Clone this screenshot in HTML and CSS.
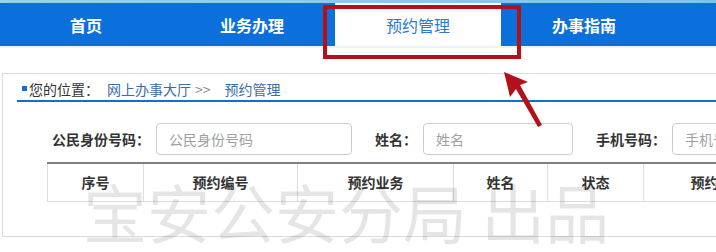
FILE: index.html
```html
<!DOCTYPE html>
<html lang="zh-CN">
<head>
<meta charset="utf-8">
<title>预约管理</title>
<link rel="stylesheet" href="styles.css">
</head>
<body>
<div class="topline"></div>
<nav class="nav">
  <a class="nav-item">首页</a>
  <a class="nav-item">业务办理</a>
  <a class="nav-item active">预约管理</a>
  <a class="nav-item">办事指南</a>
</nav>
<div class="nav-shadow"></div>

<div class="panel">
  <div class="crumb">
    <span class="crumb-dot"></span>
    <span class="crumb-label">您的位置：</span>
    <a class="crumb-link">网上办事大厅</a>
    <span class="crumb-sep">&gt;&gt;</span>
    <a class="crumb-link">预约管理</a>
  </div>

  <div class="search">
    <label class="field-label">公民身份号码：</label>
    <input class="field-input w-id" placeholder="公民身份号码">
    <label class="field-label">姓名：</label>
    <input class="field-input w-name" placeholder="姓名">
    <label class="field-label">手机号码：</label>
    <input class="field-input w-phone" placeholder="手机号码">
  </div>

  <table class="grid">
    <thead>
      <tr>
        <th class="c1">序号</th>
        <th class="c2">预约编号</th>
        <th class="c3">预约业务</th>
        <th class="c4">姓名</th>
        <th class="c5">状态</th>
        <th class="c6">预约时间</th>
        <th class="c7">操作</th>
      </tr>
    </thead>
  </table>
</div>

<div class="watermark">宝安公安分局 出品</div>

<div class="highlight"></div>
<svg class="arrow" width="60" height="70" viewBox="0 0 60 70">
  <polygon points="3,2 27,12 19,15 41,55 37,57 15,19 9,27" fill="#b3101a"/>
</svg>
</body>
</html>
```

FILE: styles.css
```css
html, body {
  margin: 0;
  padding: 0;
  overflow: hidden;
  background: #fff;
  font-family: "Liberation Sans", "Noto Sans CJK SC", sans-serif;
}

body {
  position: relative;
  width: 716px;
  height: 252px;
}

.topline {
  height: 3px;
  background: linear-gradient(to right, #9ad0ee, #7cc3ea);
}

.nav {
  display: flex;
  height: 43px;
  padding-left: 3px;
  background: #0b6fdc;
}

.nav-item {
  width: 166px;
  flex: none;
  text-align: center;
  line-height: 44px;
  font-size: 16px;
  font-weight: bold;
  color: #fff;
  font-family: "Noto Sans CJK SC", sans-serif;
}

.nav-item.active {
  background: #fff;
  color: #2b7ad6;
  font-weight: normal;
}

.nav-shadow {
  height: 2px;
  background: #eef3f9;
}

.panel {
  margin: 25px 0 0 2px;
  width: 1200px;
  height: 162px;
  border: 1px solid #dcdcdc;
}

.crumb {
  display: flex;
  align-items: center;
  margin-left: 14px;
  padding: 3px 0 0 5px;
  height: 23px;
  border-bottom: 2px solid #0b6fdc;
  font-size: 14px;
  font-family: "Noto Sans CJK SC", sans-serif;
}

.crumb-dot {
  width: 5px;
  height: 5px;
  background: #0b6fdc;
  margin-right: 2px;
}

.crumb-label {
  color: #333;
  width: 78px;
}

.crumb-link {
  color: #3a6ea5;
}

.crumb-sep {
  color: #888;
  margin: 0 14px 0 4px;
}

.search {
  display: flex;
  align-items: center;
  margin: 21px 0 0 49px;
  height: 32px;
}

.field-label {
  font-size: 14px;
  font-weight: bold;
  color: #333;
  font-family: "Noto Sans CJK SC", sans-serif;
  margin-right: 6px;
}

.field-input {
  box-sizing: border-box;
  height: 32px;
  border: 1px solid #ccc;
  border-radius: 4px;
  padding: 0 12px;
  font-size: 14px;
  font-family: "Noto Sans CJK SC", sans-serif;
  margin-right: 23px;
}

.field-input::placeholder {
  color: #a0a0a0;
}

.w-id { width: 196px; }
.w-name { width: 150px; }
.w-phone { width: 150px; }

.grid {
  margin: 7px 0 0 44px;
  border-collapse: collapse;
  border-top: 2px solid #7f7f7f;
  border-left: 1px solid #ddd;
}

.grid th {
  box-sizing: border-box;
  height: 38px;
  padding: 0;
  border-right: 1px solid #ddd;
  border-bottom: 1px solid #ddd;
  font-size: 14px;
  font-weight: bold;
  color: #333;
  font-family: "Noto Sans CJK SC", sans-serif;
  text-align: center;
}

.c1 { width: 96px; }
.c2 { width: 154px; }
.c3 { width: 156px; }
.c4 { width: 94px; }
.c5 { width: 96px; }
.c6 { width: 150px; }
.c7 { width: 120px; }

.watermark {
  position: absolute;
  left: 83px;
  top: 170px;
  font-size: 64px;
  line-height: 80px;
  color: rgba(0, 0, 0, 0.1);
  font-family: "Noto Sans CJK SC", sans-serif;
  font-weight: 400;
  white-space: nowrap;
  pointer-events: none;
}

.highlight {
  position: absolute;
  left: 323px;
  top: 5px;
  width: 190px;
  height: 46px;
  border: 4px solid #b3101a;
}

.arrow {
  position: absolute;
  left: 501px;
  top: 70px;
}
```
